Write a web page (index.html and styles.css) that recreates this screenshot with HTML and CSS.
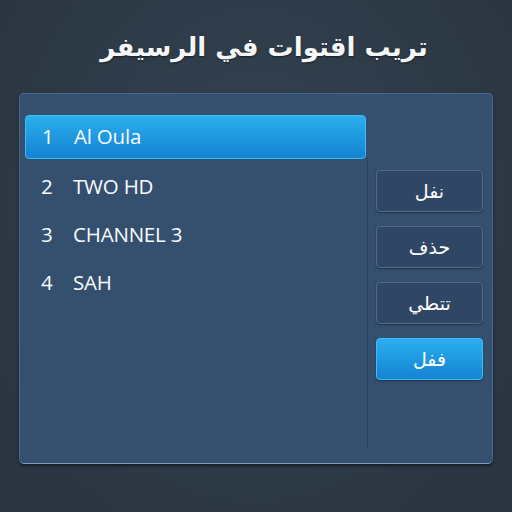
FILE: index.html
```html
<!DOCTYPE html>
<html lang="ar">
<head>
<meta charset="utf-8">
<link rel="stylesheet" href="styles.css">
</head>
<body>
<div class="screen">
  <h1 class="title" dir="rtl">تريب اقتوات في الرسيفر</h1>
  <div class="panel">
    <div class="list">
      <div class="row selected"><span class="num">1</span><span class="name">Al Oula</span></div>
      <div class="row"><span class="num">2</span><span class="name">TWO HD</span></div>
      <div class="row"><span class="num">3</span><span class="name">CHANNEL 3</span></div>
      <div class="row"><span class="num">4</span><span class="name">SAH</span></div>
    </div>
    <div class="actions">
      <div class="btn" dir="rtl">نفل</div>
      <div class="btn" dir="rtl">حذف</div>
      <div class="btn" dir="rtl">تتطي</div>
      <div class="btn primary" dir="rtl">ففل</div>
    </div>
  </div>
</div>
</body>
</html>
```
FILE: styles.css
```css
html, body {
  margin: 0;
  padding: 0;
  width: 512px;
  height: 512px;
  overflow: hidden;
  background: #2c3844;
}
.screen {
  width: 512px;
  height: 512px;
  display: flex;
  flex-direction: column;
  font-family: "Open Sans", "DejaVu Sans", sans-serif;
  color: #fff;
  background: radial-gradient(ellipse at 50% 40%, #344352 0%, #2b3642 80%);
}
.title {
  margin: 0;
  height: 93px;
  padding-left: 16px;
  display: flex;
  align-items: center;
  justify-content: center;
  font-family: "DejaVu Sans", sans-serif;
  font-weight: bold;
  font-size: 26px;
  color: #f4f6f8;
  text-shadow: 0 1px 2px rgba(0,0,0,0.5);
}
.panel {
  margin-left: 19px;
  width: 472px;
  height: 369px;
  display: flex;
  background: #35506f;
  border: 1px solid #4c6788;
  border-bottom: 1px solid #7d9bc0;
  border-radius: 5px;
  box-shadow: 0 2px 3px rgba(0,0,0,0.5);
}
.list {
  width: 342px;
  padding: 21px 0 0 5px;
  display: flex;
  flex-direction: column;
}
.row {
  height: 48px;
  display: flex;
  align-items: center;
  padding-left: 16px;
  padding-bottom: 3px;
  font-size: 20.5px;
  color: #fafbfc;
  box-sizing: border-box;
  letter-spacing: -0.2px;
}
.row.selected {
  height: 44px;
  margin-bottom: 4px;
  margin-right: 1px;
  padding-bottom: 2px;
  border-radius: 4px;
  background: linear-gradient(#2aaeee, #1583d2);
  border: 1px solid #3dbef5;
}
.num {
  width: 32px;
}
.actions {
  flex: 1;
  margin: 64px 0 14px 0;
  padding: 12px 9px 0 8px;
  border-left: 1px solid #2a4161;
  display: flex;
  flex-direction: column;
  gap: 14px;
}
.btn {
  height: 42px;
  box-sizing: border-box;
  display: flex;
  align-items: center;
  justify-content: center;
  font-family: "DejaVu Sans", sans-serif;
  font-size: 19px;
  color: #fff;
  background: #2f4764;
  border: 1px solid #51688a;
  border-radius: 4px;
  box-shadow: 0 1px 2px rgba(0,0,0,0.4);
}
.btn.primary {
  background: linear-gradient(#2aaeee, #1583d2);
  border-color: #3dbef5;
}
```
